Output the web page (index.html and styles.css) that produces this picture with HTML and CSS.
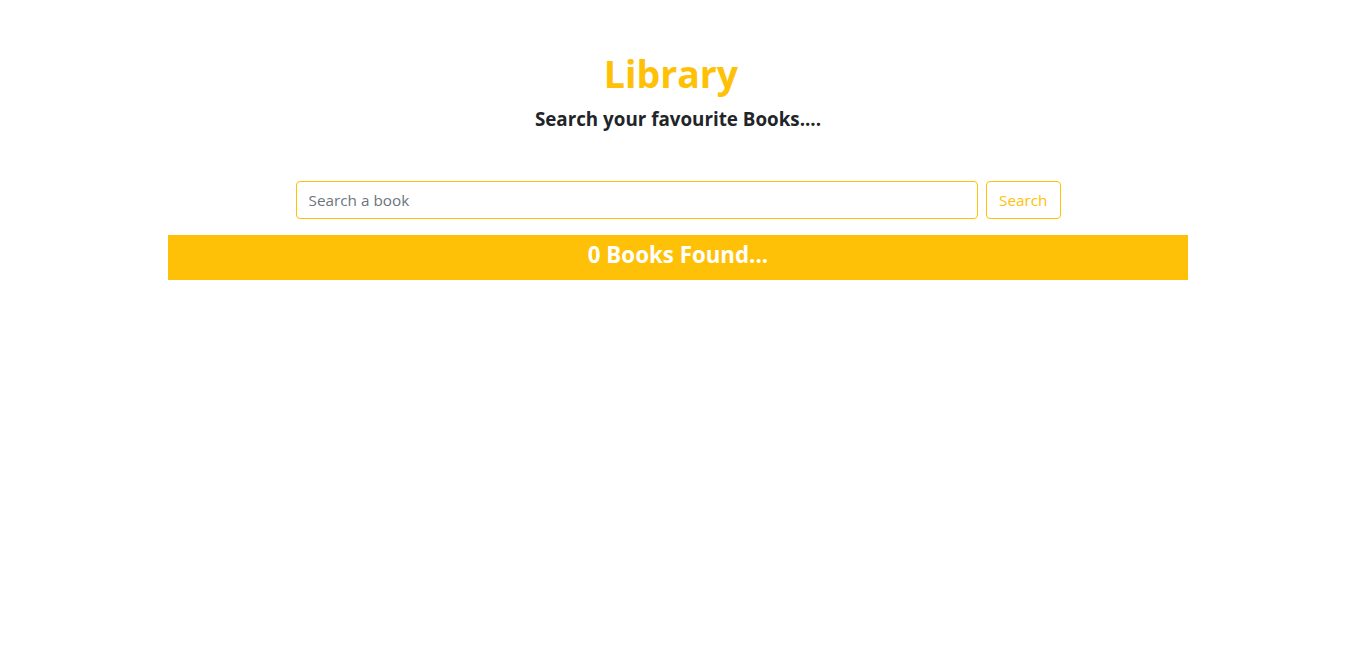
FILE: index.html
```html
<!DOCTYPE html>
<html lang="en">
<head>
<meta charset="utf-8">
<title>Library</title>
<link rel="stylesheet" href="styles.css">
</head>
<body>
<main class="app">
  <header class="header">
    <h1 class="title">Library</h1>
    <h4 class="subtitle">Search your favourite Books....</h4>
  </header>
  <form class="search">
    <input class="search-input" type="text" placeholder="Search a book">
    <button class="search-btn" type="button">Search</button>
  </form>
  <div class="results-bar">0 Books Found...</div>
</main>
</body>
</html>
```

FILE: styles.css
```css
* { box-sizing: border-box; }
html, body { margin: 0; padding: 0; background: #fff; }
body {
  font-family: "Open Sans", "Noto Sans", sans-serif;
  color: #212529;
}
.app {
  width: 1020px;
  margin: 0 auto;
  position: relative;
  left: 1.5px;
}
.header {
  display: flex;
  flex-direction: column;
  align-items: center;
  padding-top: 50px;
}
.title {
  margin: 0;
  font-size: 37.5px;
  font-weight: 700;
  line-height: 48px;
  color: #ffc107;
  position: relative;
  left: -7px;
}
.subtitle {
  margin: 9px 0 0;
  font-size: 18.8px;
  font-weight: 700;
  line-height: 24px;
  color: #212529;
}
.search {
  display: flex;
  gap: 8px;
  width: 75%;
  margin: 50px auto 0;
}
.search-input {
  flex: 1;
  height: 38px;
  padding: 6px 12px;
  font: 15.3px "Open Sans", sans-serif;
  color: #495057;
  border: 1px solid #ffc107;
  border-radius: 4px;
  outline: none;
}
.search-input::placeholder { color: #6c757d; }
.search-btn {
  height: 38px;
  padding: 6px 12px;
  font: 15.3px "Open Sans", sans-serif;
  color: #ffc107;
  background: #fff;
  border: 1px solid #ffc107;
  border-radius: 4px;
}
.results-bar {
  margin-top: 16px;
  height: 45px;
  padding-bottom: 6px;
  display: flex;
  align-items: center;
  justify-content: center;
  background: #ffc107;
  color: #fff;
  font-size: 22.3px;
  font-weight: 700;
}
```
